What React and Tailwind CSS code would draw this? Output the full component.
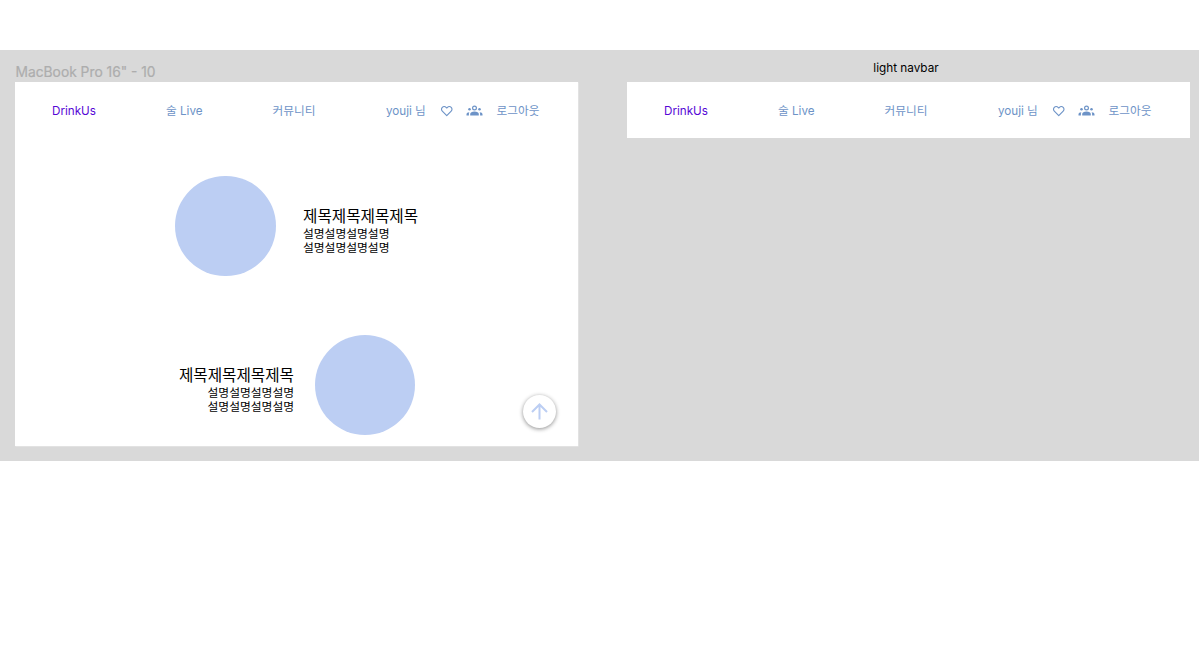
import React from 'react';

function Heart() {
  return (
    <svg className="size-[13.5px] shrink-0" viewBox="0 0 24 24" fill="none" stroke="currentColor" strokeWidth="2" strokeLinejoin="round">
      <path d="M12 20.8 4.1 12.6a4.7 4.7 0 0 1 0-6.7 4.7 4.7 0 0 1 6.7 0l1.2 1.2 1.2-1.2a4.7 4.7 0 0 1 6.7 0 4.7 4.7 0 0 1 0 6.7Z" />
    </svg>
  );
}

function People() {
  return (
    <svg className="h-[12px] w-[17px] shrink-0" viewBox="0 0 17 12" fill="currentColor">
      <circle cx="8.5" cy="3" r="1.9" fill="none" stroke="currentColor" strokeWidth="1.2" />
      <circle cx="3.5" cy="4.2" r="1.25" />
      <circle cx="13.5" cy="4.2" r="1.25" />
      <path d="M4.2 10.500V9C4.2 7.300 6 6.400 8.500 6.400s4.300.900 4.300 2.600V10.500Z" />
      <path d="M.5 10.500V9.200c0-1.100 1.100-1.800 2.900-1.900-.4.600-.5 1.100-.5 1.800V10.500ZM16.500 10.500V9.200c0-1.100-1.100-1.800-2.900-1.900.4.600.5 1.100.5 1.800V10.500Z" />
    </svg>
  );
}

function Navbar() {
  return (
    <nav className="flex h-[56px] w-[563px] items-center whitespace-nowrap bg-white pl-[37px] pt-[2px] text-[11.65px] leading-[14px] text-[#6d93c7]">
      <span className="w-[114px] text-[#5607d6]">DrinkUs</span>
      <span className="w-[106.5px]">술 Live</span>
      <span className="w-[113.5px]">커뮤니티</span>
      <span className="w-[53.5px]">youji 님</span>
      <span className="flex w-[26px]"><Heart /></span>
      <span className="flex w-[31px]"><People /></span>
      <span>로그아웃</span>
    </nav>
  );
}

function Copy({ right }) {
  return (
    <div className={right ? 'whitespace-nowrap text-right' : 'whitespace-nowrap'}>
      <h2 className="text-[15.65px] leading-[19px]">제목제목제목제목</h2>
      <p className="pt-[0.5px] text-[11.75px] leading-[14.2px]">설명설명설명설명<br />설명설명설명설명</p>
    </div>
  );
}

export default function App() {
  return (
    <div className="min-h-screen bg-white pt-[50px] font-['Inter','Noto_Sans_CJK_KR',sans-serif] text-black">
      <main className="flex h-[411px] w-[1199px] bg-[#d9d9d9] pl-[15px]">
        <section className="w-[563px] shrink-0">
          <h1 className="h-[32px] whitespace-nowrap pl-[0.5px] pt-[13px] text-[13.8px] leading-[18px] text-[#adadad] [-webkit-text-stroke:0.2px_#adadad]">MacBook Pro 16" - 10</h1>
          <div className="relative h-[364px] bg-white shadow-[0.5px_0.5px_0_#ececec]">
            <Navbar />
            <div className="flex h-[101px] items-center gap-[27.5px] pl-[160px] mt-[37.5px]">
              <div className="size-[100.5px] shrink-0 rounded-full bg-[#bccef3]" />
              <div className="pt-[10px]"><Copy /></div>
            </div>
            <div className="mt-[58px] flex h-[101px] items-center gap-[20.5px]">
              <div className="w-[279px] pt-[10px]"><Copy right /></div>
              <div className="size-[100.5px] shrink-0 rounded-full bg-[#bccef3]" />
            </div>
            <button aria-label="위로" className="absolute bottom-[18.5px] right-[22px] flex size-[33px] items-center justify-center rounded-full bg-white text-[#bccef3] shadow-[0_1px_4px_rgba(0,0,0,0.45)]">
              <svg className="size-[17px]" viewBox="0 0 17 17" fill="none" stroke="currentColor" strokeWidth="2">
                <path d="M8.5 16.5V1.5M1 9l7.5-7.5L16 9" />
              </svg>
            </button>
          </div>
        </section>
        <section className="ml-[49px] w-[563px] shrink-0">
          <h2 className="h-[32px] pr-[5px] pt-[11px] text-center text-[11.75px] leading-[14px]">light navbar</h2>
          <Navbar />
        </section>
      </main>
    </div>
  );
}
